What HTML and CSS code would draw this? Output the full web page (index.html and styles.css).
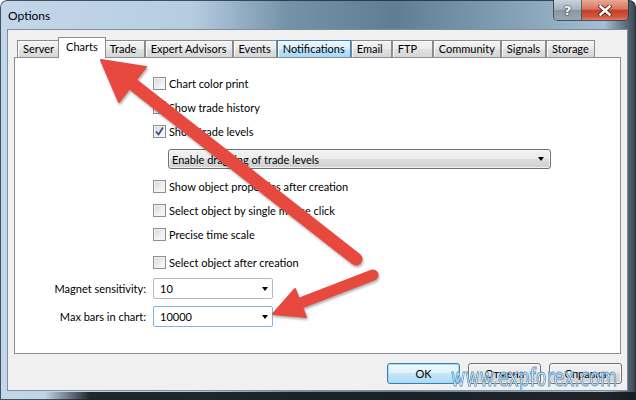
FILE: index.html
```html
<!DOCTYPE html>
<html lang="en">
<head>
  <meta charset="UTF-8">
  <meta name="viewport" content="width=device-width, initial-scale=1.0">
  <title>Options</title>
  <link rel="stylesheet" href="styles.css">
</head>
<body>
  <div class="window">
    <div class="titlebar">
      <span class="title">Options</span>
      <div class="caption-buttons">
        <span class="cap-btn help">?</span>
        <span class="cap-btn close">
          <svg width="14" height="11" viewBox="0 0 14 11"><path d="M2.5 1.5 L11.5 9.5 M11.5 1.5 L2.5 9.5" stroke="#4a1a10" stroke-width="4.2" stroke-linecap="square"/><path d="M2.5 1.5 L11.5 9.5 M11.5 1.5 L2.5 9.5" stroke="#fff" stroke-width="2.6" stroke-linecap="square"/></svg>
        </span>
      </div>
    </div>

    <div class="client">
      <div class="tabs">
        <span class="tab">Server</span>
        <span class="tab active">Charts</span>
        <span class="tab">Trade</span>
        <span class="tab">Expert Advisors</span>
        <span class="tab">Events</span>
        <span class="tab hover">Notifications</span>
        <span class="tab">Email</span>
        <span class="tab">FTP</span>
        <span class="tab">Community</span>
        <span class="tab">Signals</span>
        <span class="tab">Storage</span>
      </div>

      <div class="panel">
        <div class="checks">
          <div class="check-row"><span class="box"></span>Chart color print</div>
          <div class="check-row"><span class="box"></span>Show trade history</div>
          <div class="check-row">
            <span class="box"><svg width="11" height="11" viewBox="0 0 11 11"><path d="M2 5.5 L4.5 8.5 L9 1.5" fill="none" stroke="#3b4f86" stroke-width="1.8"/></svg></span>Show trade levels
          </div>
          <div class="dropdown">Enable dragging of trade levels<span class="arrow"></span></div>
          <div class="check-row gap-top"><span class="box"></span>Show object properties after creation</div>
          <div class="check-row"><span class="box"></span>Select object by single mouse click</div>
          <div class="check-row"><span class="box"></span>Precise time scale</div>
          <div class="check-row gap-small"><span class="box"></span>Select object after creation</div>
        </div>

        <div class="fields">
          <span class="field-label">Magnet sensitivity:</span>
          <div class="combo">10<span class="arrow"></span></div>
          <span class="field-label">Max bars in chart:</span>
          <div class="combo focused">10000<span class="arrow"></span></div>
        </div>
      </div>

      <div class="buttons">
        <button class="btn default">OK</button>
        <button class="btn">Отмена</button>
        <button class="btn">Справка</button>
      </div>
    </div>

    <div class="watermark">www.expforex.com</div>

    <svg class="arrows" width="636" height="400" viewBox="0 0 636 400">
      <g fill="#e8493f" stroke="#e8493f">
        <line x1="135" y1="86" x2="356" y2="259" stroke-width="13" stroke-linecap="round"/>
        <polygon points="101,60 146,67 119,102" stroke-width="2" stroke-linejoin="round"/>
        <line x1="298" y1="304" x2="373" y2="275" stroke-width="11" stroke-linecap="round"/>
        <polygon points="273,314 295,289 306,317" stroke-width="2" stroke-linejoin="round"/>
      </g>
    </svg>
  </div>
</body>
</html>
```

FILE: styles.css
```css
body {
  margin: 0;
  font-family: Lato, "Noto Sans", sans-serif;
  font-size: 11px;
  color: #000;
}

.window {
  position: relative;
  width: 636px;
  height: 400px;
  display: flex;
  flex-direction: column;
  border-radius: 7px 7px 0 0;
  overflow: hidden;
  background:
    linear-gradient(90deg, rgba(20, 24, 28, 0) 0, rgba(20, 24, 28, 0) 45px, rgba(20, 24, 28, 0.92) 90px) left bottom / 100% 8px no-repeat,
    linear-gradient(90deg, #c3d7ea 0, #b6cde1 30%, #7593a8 45%, #5f7e93 62%, #86a3b8 82%, #a5bfd4 95%, #3a4450 100%);
  box-shadow: inset 0 0 0 1px rgba(25, 35, 45, 0.75);
}

.titlebar {
  height: 29px;
  display: flex;
  align-items: flex-start;
  padding: 0 7px 0 8px;
}

.title {
  padding-top: 8px;
  font-size: 12px;
}

.caption-buttons {
  margin-left: auto;
  display: flex;
  height: 20px;
  border: 1px solid rgba(30, 40, 50, 0.7);
  border-top: none;
  border-radius: 0 0 5px 5px;
  overflow: hidden;
}

.cap-btn {
  display: flex;
  align-items: center;
  justify-content: center;
  height: 20px;
}

.help {
  width: 27px;
  border-right: 1px solid rgba(30, 40, 50, 0.6);
  background: linear-gradient(#c9d3da, #a4b1bb 50%, #8796a2 51%, #9aa8b3);
  color: #fff;
  font-weight: bold;
  font-size: 13px;
  font-family: "DejaVu Sans", sans-serif;
  text-shadow: 0 0 2px #223, 0 0 1px #223;
}

.close {
  width: 46px;
  background: linear-gradient(#e8a995, #d9775f 45%, #c5402a 52%, #d2583f 85%, #e0836a);
}

.client {
  flex: 1;
  margin: 0 8px 9px 7px;
  border: 1px solid #7d8f9f;
  background: #f0f0f0;
  padding: 7px 6px 0 6px;
  display: flex;
  flex-direction: column;
}

.tabs {
  display: flex;
  align-items: flex-end;
  height: 20px;
  padding-left: 3px;
}

.tab {
  box-sizing: border-box;
  height: 17px;
  padding: 0 5px;
  min-width: 41px;
  white-space: nowrap;
  border: 1px solid #898c95;
  border-bottom: none;
  line-height: 15px;
  background: linear-gradient(#f3f3f3, #ebebeb 50%, #e1e1e1 50%, #d6d6d6);
  box-shadow: inset 1px 1px 0 #fbfbfb;
}

.tab.hover {
  border-color: #3c7fb1;
  background: linear-gradient(#eaf6fd, #d9f0fc 50%, #bee6fd 50%, #a7d9f5);
}

.tab.active {
  position: relative;
  z-index: 1;
  height: 21px;
  margin: 0 -2px -1px;
  padding: 0 7px;
  line-height: 18px;
  background: #fff;
  box-shadow: none;
}

.panel {
  box-sizing: border-box;
  height: 297px;
  border: 1px solid #898c95;
  background: #fff;
}

.checks {
  padding: 13px 0 0 138px;
}

.check-row {
  height: 24px;
  display: flex;
  align-items: center;
}

.check-row.gap-top {
  margin-top: 5px;
}

.check-row.gap-small {
  margin-top: 4px;
}

.box {
  box-sizing: border-box;
  width: 13px;
  height: 13px;
  margin-right: 3px;
  border: 1px solid #8e8f8f;
  background: linear-gradient(135deg, #d4d6da, #f4f4f4 70%, #fdfdfd);
  box-shadow: inset 0 0 0 1px #f2f2f2;
  display: flex;
}

.dropdown {
  box-sizing: border-box;
  width: 383px;
  height: 20px;
  margin: 6px 0 0 15px;
  padding: 0 6px 0 3px;
  display: flex;
  align-items: center;
  justify-content: space-between;
  border: 1px solid #707070;
  border-radius: 3px;
  background: linear-gradient(#f2f2f2, #ebebeb 50%, #dddddd 50%, #cfcfcf);
  box-shadow: inset 0 0 0 1px rgba(255, 255, 255, 0.7);
}

.arrow {
  width: 0;
  height: 0;
  border-left: 3.5px solid transparent;
  border-right: 3.5px solid transparent;
  border-top: 4px solid #000;
}

.fields {
  display: grid;
  grid-template-columns: 131px 120px;
  column-gap: 7px;
  row-gap: 7px;
  align-items: center;
  margin-top: 4px;
}

.field-label {
  text-align: right;
}

.combo {
  box-sizing: border-box;
  height: 21px;
  padding: 0 4px 0 6px;
  display: flex;
  align-items: center;
  justify-content: space-between;
  border: 1px solid #b5b8bf;
  border-radius: 2px;
  background: #fff;
}

.combo.focused {
  border-color: #7eb4ea;
}

.buttons {
  display: flex;
  justify-content: flex-end;
  gap: 8px;
  margin: 9px -1px 0 0;
}

.btn {
  width: 73px;
  height: 21px;
  padding: 0;
  font-family: inherit;
  font-size: 11px;
  border: 1px solid #707070;
  border-radius: 3px;
  background: linear-gradient(#f2f2f2, #ebebeb 50%, #dddddd 50%, #cfcfcf);
  box-shadow: inset 0 0 0 1px rgba(255, 255, 255, 0.7);
}

.btn.default {
  border-color: #3c7fb1;
  background: linear-gradient(#eef8fd, #dff2fc 50%, #c4e6f8 50%, #b2dbf2);
  box-shadow: inset 0 0 0 1px #9fdcf8;
}

.watermark {
  position: absolute;
  left: 451px;
  top: 363px;
  font-family: "DejaVu Sans", sans-serif;
  font-size: 25px;
  line-height: normal;
  transform: scaleX(0.7);
  transform-origin: left top;
  white-space: nowrap;
  color: rgba(214, 236, 250, 0.8);
  -webkit-text-stroke: 1px #6198c2;
  pointer-events: none;
}

.arrows {
  position: absolute;
  left: 0;
  top: 0;
  pointer-events: none;
  filter: drop-shadow(1px 2px 1px rgba(0, 0, 0, 0.3));
}
```
